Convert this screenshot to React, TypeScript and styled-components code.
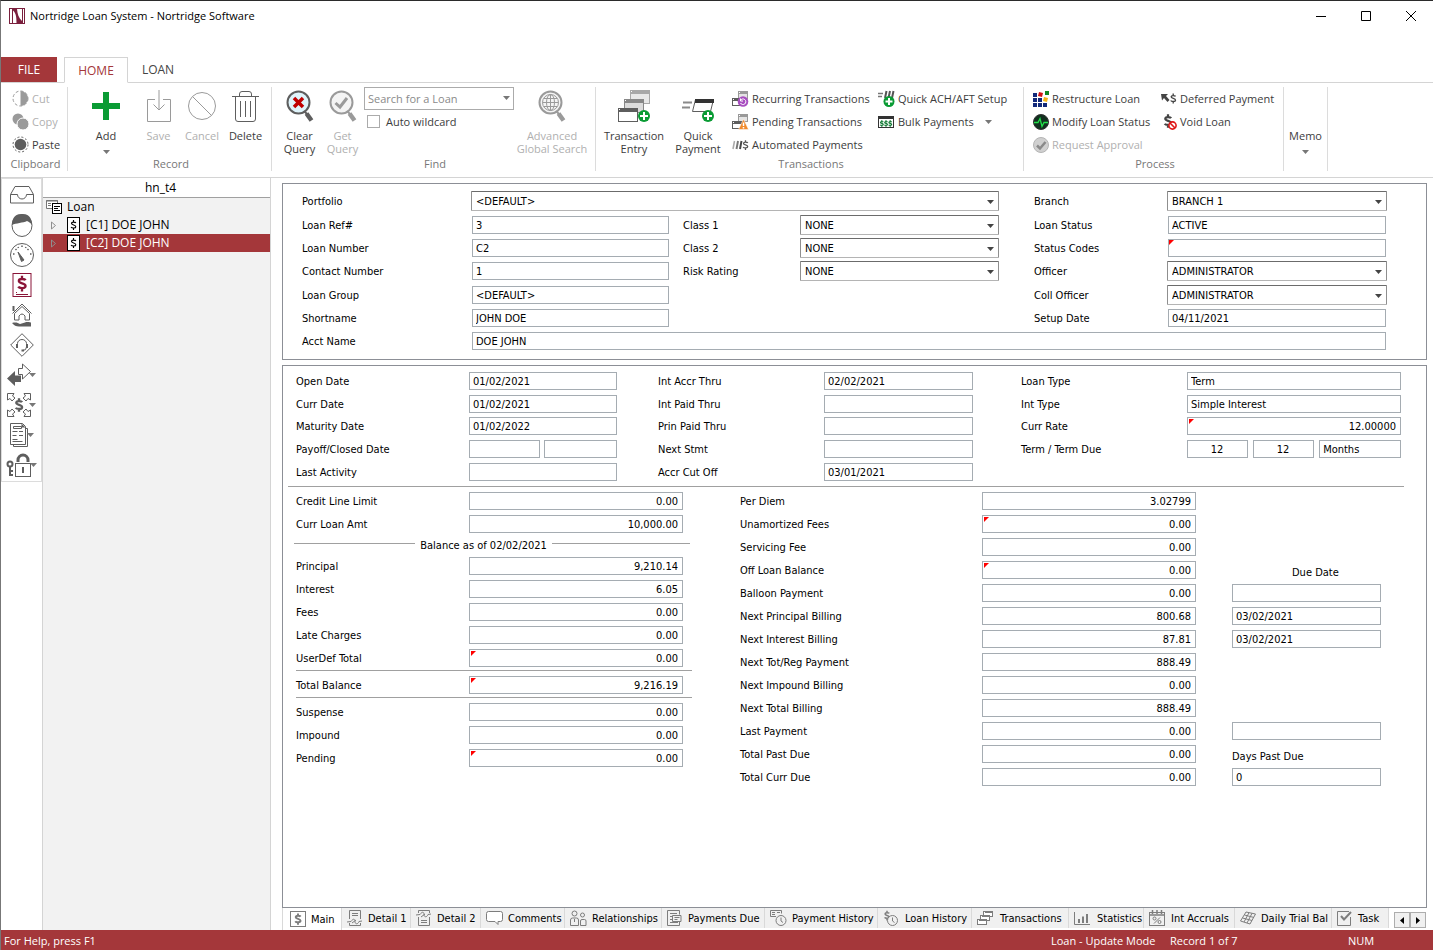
import React from "react";
import styled, { createGlobalStyle, css } from "styled-components";

const uiFont = `"Open Sans", "Noto Sans", sans-serif`;
const formFont = `"DejaVu Sans Condensed", "DejaVu Sans", sans-serif`;
const red = "#a4373a";
const ink = "#5e5e5e";
const dim = "#9a9a9a";

const GlobalStyle = createGlobalStyle`
  *, *::before, *::after { box-sizing: border-box; }
  body { margin: 0; background: #fff; font-family: ${uiFont}; font-size: 12px; color: #000; }
  button, input, select { font: inherit; color: inherit; margin: 0; padding: 0; border: 0; background: none; border-radius: 0; }
  svg { display: block; flex: none; }
`;

/* ---------- window frame ---------- */

const Window = styled.div`
  display: flex;
  flex-direction: column;
  min-height: 100vh;
  border-top: 1px solid #2b2b2b;
  border-left: 1px solid #777;
`;

const TitleBar = styled.header`
  display: flex;
  align-items: flex-start;
  height: 56px;
`;

const AppTitle = styled.h1`
  flex: 1;
  display: flex;
  align-items: center;
  gap: 5px;
  height: 29px;
  margin: 0;
  padding-left: 8px;
  font-size: 11px;
  font-weight: 400;
`;

const WindowButton = styled.button`
  display: flex;
  align-items: center;
  justify-content: center;
  width: 45px;
  height: 29px;
`;

const RibbonTabs = styled.nav`
  display: flex;
  height: 26px;
  border-bottom: 1px solid #d4d4d4;
`;

const FileTab = styled.button`
  width: 56px;
  margin-right: 7px;
  background: ${red};
  color: #fff;
`;

const RibbonTab = styled.button<{ $active?: boolean; $width: number }>`
  width: ${(p) => p.$width}px;
  color: #444;
  ${(p) =>
    p.$active &&
    css`
      height: 26px;
      border: 1px solid #d4d4d4;
      border-bottom-color: #fff;
      background: #fff;
      color: ${red};
    `}
`;

/* ---------- ribbon ---------- */

const Ribbon = styled.section`
  display: flex;
  height: 95px;
  padding-top: 4px;
  border-bottom: 1px solid #d4d4d4;
  font-size: 11px;
  color: #3c3c3c;
`;

const Group = styled.div<{ $width: number }>`
  display: flex;
  flex-direction: column;
  flex: none;
  width: ${(p) => p.$width}px;
  height: 84px;
  border-right: 1px solid #dcdcdc;
`;

const GroupBody = styled.div<{ $left: number }>`
  display: flex;
  flex: 1;
  align-items: flex-start;
  padding-left: ${(p) => p.$left}px;
`;

const GroupCaption = styled.div`
  height: 14px;
  padding-left: 3px;
  line-height: 14px;
  text-align: center;
  color: #777;
`;

const BigButton = styled.button<{ $width: number; $after?: number }>`
  display: flex;
  flex-direction: column;
  align-items: center;
  flex: none;
  width: ${(p) => p.$width}px;
  margin-right: ${(p) => p.$after ?? 0}px;
  line-height: 13px;
  white-space: nowrap;
  &:disabled { color: #b0b0b0; }
`;

const BigIcon = styled.span`
  display: flex;
  align-items: center;
  justify-content: center;
  height: 36px;
  margin: 1px 0 5px;
`;

const ArrowSlot = styled.span`
  margin-top: 8px;
`;

const SmallColumn = styled.div<{ $width: number }>`
  display: flex;
  flex-direction: column;
  flex: none;
  width: ${(p) => p.$width}px;
`;

const SmallButton = styled.button`
  display: flex;
  align-items: center;
  gap: 3px;
  height: 23px;
  white-space: nowrap;
  &:disabled { color: #b0b0b0; }
`;

const MenuMark = styled.span`
  padding-left: 8px;
`;

const SearchColumn = styled.div`
  display: flex;
  flex-direction: column;
  gap: 5px;
  width: 150px;
  margin-right: 2px;
`;

const SearchBox = styled.label`
  position: relative;
  display: block;
  select {
    appearance: none;
    width: 100%;
    height: 23px;
    padding-left: 3px;
    border: 1px solid #ababab;
    background: #fff;
    color: #8a8a8a;
  }
  svg { position: absolute; right: 4px; top: 9px; }
`;

const CheckLabel = styled.label`
  display: flex;
  align-items: center;
  gap: 6px;
  height: 13px;
  padding-left: 3px;
  input {
    appearance: none;
    width: 13px;
    height: 13px;
    border: 1px solid #ababab;
    background: #fff;
  }
`;

/* ---------- body ---------- */

const Body = styled.div`
  display: flex;
  flex: 1;
`;

const Rail = styled.nav`
  flex: none;
  align-self: flex-start;
  width: 41px;
  padding: 1px 0;
  border: 1px solid #dcdcdc;
`;

const RailButton = styled.button`
  display: flex;
  align-items: center;
  justify-content: center;
  width: 100%;
  height: 30px;
  svg + svg { margin-left: -2px; }
`;

const TreePanel = styled.aside`
  flex: none;
  width: 229px;
  background: #f2f2f2;
  border-left: 1px solid #d4d4d4;
  border-right: 1px solid #d4d4d4;
`;

const TreeHeader = styled.div`
  height: 20px;
  padding-left: 8px;
  line-height: 20px;
  text-align: center;
  background: #fff;
  border-bottom: 1px solid #a0a0a0;
`;

const TreeList = styled.ul`
  margin: 0;
  padding: 0;
  list-style: none;
`;

const TreeRow = styled.li<{ $root?: boolean; $selected?: boolean }>`
  display: flex;
  align-items: center;
  gap: ${(p) => (p.$root ? 5 : 6)}px;
  height: 18px;
  padding-left: ${(p) => (p.$root ? 3 : 8)}px;
  line-height: 16px;
  background: ${(p) => (p.$selected ? red : "transparent")};
  color: ${(p) => (p.$selected ? "#fff" : "#000")};
  svg + svg { margin-left: 5px; }
`;

const Main = styled.main`
  display: flex;
  flex-direction: column;
  flex: 1;
  min-width: 0;
  padding: 5px 6px 0 11px;
  font-family: ${formFont};
  font-size: 11px;
`;

const HeaderPanel = styled.section`
  display: grid;
  grid-template-columns: 169px 199fr 130px 199fr 168px 220fr;
  grid-template-rows: 24px 23px 23px 24px 23px 23px 20px;
  align-items: start;
  padding: 7px 39px 8px 19px;
  border: 1px solid #8c8f96;
`;

const DetailPanel = styled.section`
  display: flex;
  flex-direction: column;
  flex: 1;
  margin-top: 5px;
  padding-top: 6px;
  border: 1px solid #8c8f96;
`;

const Label = styled.label<{ $row: number; $col: number; $indent?: number; $tall?: boolean }>`
  grid-row: ${(p) => p.$row};
  grid-column: ${(p) => p.$col};
  padding-top: 1px;
  padding-left: ${(p) => p.$indent ?? 0}px;
  line-height: ${(p) => (p.$tall ? 20 : 18)}px;
  white-space: nowrap;
`;

/* Sits just above the field below it. */
const CaptionLabel = styled(Label)`
  align-self: end;
  line-height: 13px;
  padding-top: 0;
`;

const Slot = styled.div<{ $row: number; $col: number; $span?: number; $gap?: number }>`
  position: relative;
  display: flex;
  gap: ${(p) => p.$gap ?? 0}px;
  grid-row: ${(p) => p.$row};
  grid-column: ${(p) => p.$col} / span ${(p) => p.$span ?? 1};
  min-width: 0;
`;

const TextInput = styled.input<{ $align?: string; $inset?: boolean; $grow?: number }>`
  flex: ${(p) => p.$grow ?? 1} 1 0;
  min-width: 0;
  height: 18px;
  margin: ${(p) => (p.$inset ? 1 : 0)}px;
  padding: 0 4px 0 3px;
  border: 1px solid #a5acb2;
  background: #fff;
  text-align: ${(p) => p.$align ?? "left"};
`;

const ComboBox = styled.select`
  appearance: none;
  flex: 1;
  min-width: 0;
  height: 20px;
  padding-left: 4px;
  border: 1px solid;
  border-color: #6b6b6b #8f8f8f #b4b4b4;
  border-radius: 1px;
  background: #fff;
`;

const ComboArrow = styled.svg`
  position: absolute;
  right: 5px;
  top: 9px;
  pointer-events: none;
`;

const Flag = styled.svg`
  position: absolute;
  left: 2px;
  top: 2px;
`;

const DatesGrid = styled.div`
  display: grid;
  grid-template-columns: 173px 148fr 207px 149fr 214px 214fr;
  grid-template-rows: 23px 22px 23px 23px 18px;
  align-items: start;
  padding: 0 25px 0 13px;
`;

const WideRule = styled.hr`
  width: auto;
  height: 1px;
  margin: 5px 22px 5px 5px;
  border: 0;
  background: #a0a0a0;
`;

const Lower = styled.div`
  display: grid;
  grid-template-columns: 387fr 641fr;
  column-gap: 57px;
  align-items: start;
  padding: 0 45px 0 13px;
`;

const AmountGrid = styled.div`
  display: grid;
  grid-template-columns: 173px 1fr;
  grid-auto-rows: 18px;
  row-gap: 5px;
`;

const BillingGrid = styled.div`
  display: grid;
  grid-template-columns: 242px 214fr 36px 149fr;
  grid-auto-rows: 18px;
  row-gap: 5px;
`;

const Rule = styled.hr`
  height: 1px;
  margin: 3px -9px 5px 0;
  border: 0;
  background: #a0a0a0;
`;

const BalanceTitle = styled.h2`
  display: flex;
  align-items: center;
  gap: 5px;
  height: 24px;
  margin: 0 -7px 0 -2px;
  font-size: 11px;
  font-weight: 400;
  white-space: nowrap;
`;

const TitleLine = styled.span<{ $grow: number }>`
  flex: ${(p) => p.$grow} 1 0;
  height: 1px;
  margin-bottom: 4px;
  background: #a0a0a0;
`;

const SheetStrip = styled.div`
  display: flex;
  align-items: flex-start;
  height: 22px;
`;

const SheetTabs = styled.div`
  display: flex;
  flex: 1;
  min-width: 0;
  overflow: hidden;
`;

const SheetTab = styled.button<{ $active?: boolean; $width: number }>`
  display: flex;
  align-items: center;
  gap: 5px;
  flex: none;
  width: ${(p) => p.$width}px;
  height: ${(p) => (p.$active ? 22 : 20)}px;
  padding-left: ${(p) => (p.$active ? 7 : 5)}px;
  background: ${(p) => (p.$active ? "#fff" : "#f0f0f0")};
  border-right: 1px solid #d9d9d9;
  border-left: ${(p) => (p.$active ? "1px solid #d9d9d9" : "0")};
  white-space: nowrap;
`;

const Scroller = styled.div`
  display: flex;
  margin: 4px 1px 0 0;
`;

const ScrollButton = styled.button`
  display: flex;
  align-items: center;
  justify-content: center;
  width: 16px;
  height: 16px;
  border: 1px solid #adadad;
  background: #f0f0f0;
`;

const StatusBar = styled.footer`
  display: flex;
  align-items: center;
  height: 20px;
  padding-left: 3px;
  font-size: 11px;
  background: ${red};
  color: #fff;
`;

const StatusCell = styled.span<{ $width?: number }>`
  ${(p) => (p.$width ? `width: ${p.$width}px;` : "flex: 1;")}
  white-space: nowrap;
`;

/* ---------- icons ---------- */

type IconProps = { w: number; h?: number; children: React.ReactNode };
const Icon = ({ w, h = w, children }: IconProps) => (
  <svg width={w} height={h} viewBox={`0 0 ${w} ${h}`} fill="none" aria-hidden="true">
    {children}
  </svg>
);

/* An S curve with a vertical bar, centred on (x, y) and scaled by s. */
const Dollar = ({ x, y, s = 1, c = ink, b = 2 }: { x: number; y: number; s?: number; c?: string; b?: number }) => (
  <g transform={`translate(${x} ${y}) scale(${s})`} stroke={c} strokeWidth={b}>
    <path d="M3.5-3.2C2.6-4.6-3-5-3-2.4-3 .4 3.4-.6 3.4 2.4 3.4 5-2.6 4.800-3.600 3M0-7.500V-4M0 4V7.500" />
  </g>
);

const DownArrow = ({ c = "#777" }: { c?: string }) => (
  <Icon w={7} h={4}>
    <path d="M0 0h7L3.500 4z" fill={c} />
  </Icon>
);

const Plus = ({ x, y, r }: { x: number; y: number; r: number }) => (
  <g>
    <circle cx={x} cy={y} r={r} fill="#0a9b34" />
    <path d={`M${x - r + 2} ${y}H${x + r - 2}M${x} ${y - r + 2}V${y + r - 2}`} stroke="#fff" strokeWidth="2" />
  </g>
);

/* A small window: outlined body with a solid title band of height t. */
const Card = ({ x, y, w, h, c, f = "#fff", t = 4 }: { x: number; y: number; w: number; h: number; c: string; f?: string; t?: number }) => (
  <g>
    <rect x={x + 0.5} y={y + 0.5} width={w - 1} height={h - 1} fill={f} stroke={c} />
    <rect x={x} y={y} width={w} height={t} fill={c} />
    <rect x={x + 1} y={y + 1} width="1" height="1" fill="#fff" />
  </g>
);

const LogoIcon = () => (
  <Icon w={16}>
    <rect width="16" height="16" fill="#7a1f3d" />
    <path d="M1 1h2v14H1zM4 2.500C7 5 7.500 9 7.500 15H4z" fill="#fff" />
    <path d="M8 1h5v12C9.500 10 8.500 6 8 1zM14 1h1v14h-1z" fill="#fff" />
  </Icon>
);

const CutIcon = () => (
  <Icon w={17}>
    <circle cx="8.500" cy="8.500" r="7.500" stroke={dim} strokeDasharray="3 2" />
    <path d="M8.500 1a7.500 7.500 0 0 1 0 15z" fill={dim} />
  </Icon>
);
const CopyIcon = () => (
  <Icon w={17}>
    <circle cx="6" cy="6" r="5.500" fill={dim} />
    <circle cx="11" cy="11" r="6" fill={dim} stroke="#fff" />
  </Icon>
);
const PasteIcon = () => (
  <Icon w={17}>
    <circle cx="8.500" cy="8.500" r="7.500" stroke={ink} strokeDasharray="2 2" />
    <circle cx="8.500" cy="8.500" r="5.800" fill={ink} />
  </Icon>
);
const AddIcon = () => (
  <Icon w={28}>
    <path d="M11 0h6v11h11v6H17v11h-6V17H0v-6h11z" fill="#0a9b34" />
  </Icon>
);
const SaveIcon = () => (
  <Icon w={24} h={32}>
    <path d="M8 9.500H.5v22h23v-22H16M12 0v20M6.500 14.500 12 20l5.500-5.500" stroke={dim} />
  </Icon>
);
const CancelIcon = () => (
  <Icon w={28}>
    <circle cx="14" cy="14" r="13.500" stroke={dim} />
    <path d="M4.500 4.500l19 19" stroke={dim} />
  </Icon>
);
const DeleteIcon = () => (
  <Icon w={27} h={31}>
    <path d="M0 5.500h27M7.500 5V3q0-2.500 2.500-2.500h7q2.500 0 2.500 2.500v2M3.500 5.500V28q0 2.500 2.500 2.500h15q2.500 0 2.500-2.500V5.500M8.500 10v16M13.500 10v16M18.500 10v16" stroke={ink} />
  </Icon>
);

const Lens = ({ c, f, children }: { c: string; f: string; children: React.ReactNode }) => (
  <Icon w={28} h={33}>
    <path d="M18 21l3 3" stroke={c} strokeWidth="2" />
    <path d="M20.500 23.500l5 7" stroke={c} strokeWidth="4.500" />
    <circle cx="12.500" cy="12.500" r="11" fill={f} stroke={c} strokeWidth="2" />
    {children}
  </Icon>
);
const ClearQueryIcon = () => (
  <Lens c={ink} f="#dff4fb">
    <path d="M8 8l9 9M17 8l-9 9" stroke="#c00000" strokeWidth="3.500" />
  </Lens>
);
const GetQueryIcon = () => (
  <Lens c={dim} f="#f4f4f4">
    <path d="M6.500 13l4.500 4 7-9" stroke={dim} strokeWidth="3" />
  </Lens>
);
const GlobeQueryIcon = () => (
  <Lens c={dim} f="#f4f4f4">
    <circle cx="12.500" cy="12.500" r="8" stroke={dim} />
    <ellipse cx="12.500" cy="12.500" rx="4" ry="8" stroke={dim} />
    <path d="M4.500 12.500h16M12.500 4.500v16M6 8.500h13M6 16.500h13" stroke={dim} />
  </Lens>
);

const TransactionEntryIcon = () => (
  <Icon w={34} h={34}>
    <Card x={13} y={1} w={20} h={14} c="#a8a8a8" f="#e8e8e8" />
    <Card x={7} y={10} w={20} h={14} c="#888" f="#dcdcdc" />
    <Card x={1} y={19} w={20} h={14} c={ink} />
    <Plus x={27} y={27} r={6} />
  </Icon>
);
const QuickPaymentIcon = () => (
  <Icon w={33} h={34}>
    <path d="M1 13.500h9M0 18.500h8" stroke="#8a8a8a" strokeWidth="2" />
    <path d="M13.500 10.500h18l-3 12h-18z" fill="#fff" stroke={ink} />
    <path d="M13 12h19" stroke="#333" strokeWidth="4" />
    <Plus x={26} y={27} r={6} />
  </Icon>
);
const RecurringIcon = () => (
  <Icon w={17} h={16}>
    <Card x={6} y={0} w={10} h={8} c="#999" f="#e4e4e4" t={3} />
    <Card x={0} y={7} w={11} h={8} c={ink} t={3} />
    <circle cx="11" cy="10.500" r="5.300" fill="#a84fc0" />
    <path d="M8.500 9.500a2.800 2.800 0 1 1 0 2.500M8.500 7.500v2.500H11" stroke="#fff" />
  </Icon>
);
const PendingIcon = () => (
  <Icon w={17} h={16}>
    <Card x={6} y={0} w={10} h={8} c="#999" f="#e4e4e4" t={3} />
    <Card x={0} y={7} w={11} h={8} c={ink} t={3} />
    <path d="M11.500 5l5 10.500h-10z" fill="#f08a2c" stroke="#fff" strokeWidth="0.500" />
    <path d="M11.500 8.500v3.500M11.500 13v1.500" stroke="#fff" strokeWidth="1.500" />
  </Icon>
);
const AutomatedIcon = () => (
  <Icon w={17} h={16}>
    <path d="M2.500 4L1 12" stroke="#aaa" strokeWidth="1.500" />
    <path d="M6 4L4.500 12" stroke="#777" strokeWidth="2" />
    <path d="M9.500 4L8 12" stroke="#444" strokeWidth="2" />
    <Dollar x={13.5} y={8} s={0.65} c="#555" />
  </Icon>
);
const AchIcon = () => (
  <Icon w={17} h={18}>
    <path d="M0 3.500h5M0 6.500h4" stroke="#777" strokeWidth="1.500" />
    <path d="M8.500 1L7 8M12 1l-1.500 7M15.500 1L14 8" stroke="#555" strokeWidth="2" />
    <Plus x={11} y={11.5} r={5.5} />
  </Icon>
);
const BulkIcon = () => (
  <Icon w={17} h={14}>
    <rect x="0.500" y="1.500" width="15" height="11" fill="#fff" stroke="#333" />
    <path d="M0 2.500h16" stroke="#333" strokeWidth="3" />
    <Dollar x={3.8} y={8.5} s={0.42} c="#117a34" b={3} />
    <Dollar x={8} y={8.5} s={0.42} c="#117a34" b={3} />
    <Dollar x={12.2} y={8.5} s={0.42} c="#117a34" b={3} />
  </Icon>
);
const RestructureIcon = () => (
  <Icon w={16}>
    <path d="M0 2h4v4H0zM0 7h4v4H0zM0 12h4v4H0zM5 7h4v4H5zM5 12h4v4H5zM10 12h4v4h-4z" fill="#12297a" />
    <path d="M6 1l4 1-1 4-4-1z" fill="#d01414" />
    <path d="M12 0h4v4h-4z" fill="#128a24" />
    <path d="M11 6l4 1-1 4-4-1z" fill="#f5b516" />
  </Icon>
);
const ModifyIcon = () => (
  <Icon w={16}>
    <circle cx="8" cy="8" r="7.500" fill="#12301f" stroke="#333" />
    <path d="M1 8.500h4l2-4 2 8 2-4h4" stroke="#22e04a" strokeWidth="1.300" />
  </Icon>
);
const ApprovalIcon = () => (
  <Icon w={16}>
    <circle cx="8" cy="8" r="7.500" fill="#d0d0d0" stroke="#b4b4b4" />
    <path d="M4 8.500l3 3 5.500-6.500" stroke="#8a8a8a" strokeWidth="2.500" />
  </Icon>
);
const DeferredIcon = () => (
  <Icon w={17} h={14}>
    <path d="M1 2h7L6 4l3.500 4-2 2L4 6 2 8.500z" fill="#444" />
    <Dollar x={13.2} y={6.5} s={0.68} c="#444" />
  </Icon>
);
const VoidIcon = () => (
  <Icon w={17} h={16}>
    <Dollar x={8} y={7} s={0.9} c="#444" b={2.5} />
    <circle cx="12.500" cy="11.500" r="3.600" fill="#fff" stroke="#e01818" strokeWidth="1.600" />
    <path d="M10 9l5 5" stroke="#e01818" strokeWidth="1.600" />
  </Icon>
);

const InboxIcon = () => (
  <Icon w={24}>
    <path d="M.5 11.500L5 3.500h14l4.500 8v8.500H.500zM.5 11.500h7a4.500 4.500 0 0 0 9 0h7" stroke={ink} />
  </Icon>
);
const PersonIcon = () => (
  <Icon w={24}>
    <ellipse cx="12" cy="12.500" rx="10" ry="11" stroke={ink} />
    <path d="M2 12C2 4 6 1 12 1s10 3 10 11c-1-2-3-3-5-4-4 2-11 2-15 4z" fill={ink} />
  </Icon>
);
const GaugeIcon = () => (
  <Icon w={24}>
    <circle cx="12" cy="12" r="11.500" stroke={ink} />
    <path d="M8 9l6 8-2.500 1.500z" fill={ink} stroke={ink} />
    <path d="M3 11h1.500M20 11h1.500M5.500 6l1 1M18.500 6l-1 1M12 2.500V4M8 4l.5 1M16 4l-.5 1" stroke={ink} strokeWidth="1.500" />
  </Icon>
);
const LoanIcon = () => (
  <Icon w={20} h={24}>
    <rect x="1" y="0.500" width="18" height="23" stroke="#8a1538" />
    <Dollar x={10} y={10.5} c="#8a1538" s={1.05} b={2.2} />
    <path d="M4 21.500h12M4 19.500h1" stroke="#8a1538" />
  </Icon>
);
const HouseIcon = () => (
  <Icon w={24}>
    <path d="M2.500 10.500L12 1l9.500 9.500M4.500 10.500v6.500H9v-4q3-4 6 0v4h4.500v-6.500L12 3.500z" stroke={ink} />
    <path d="M3.500 8V3" stroke={ink} strokeWidth="2" />
    <path d="M2 20c4-1 6 0 8 1l5-1.500c2-1 6 0 6 0v4H9c-3 0-5-1-7-3.500z" fill={ink} />
  </Icon>
);
const HeadsetIcon = () => (
  <Icon w={24}>
    <path d="M12 .7L23.300 12 12 23.300.7 12zM7.500 14V10.500a4.500 4 0 0 1 9 0V14q0 3.500-4 3.500" stroke={ink} />
    <path d="M7 11v4M17 11v4M11.500 17.500h2.500" stroke={ink} strokeWidth="2" />
  </Icon>
);
const SwapIcon = () => (
  <Icon w={24}>
    <path d="M11.500 5.500h4v-4.500l8 7.500-8 7.500v-4.500h-4z" fill="#fff" stroke={ink} />
    <path d="M0 15.500L8 8v4.500h6V19H8v4z" fill={ink} />
  </Icon>
);
const SpreadIcon = () => (
  <Icon w={24}>
    <Dollar x={12} y={12} s={0.9} b={2.6} />
    <path d="M.5 7V.5H7L5.500 3 8 5 5 8 3 5.500zM17 .5h6.500V7L21 5.500 19 8l-3-3 2.500-2zM.5 17v6.500H7L5.500 21 8 19l-3-3-2 2.500zM23.500 17v6.500H17l1.500-2.500L16 19l3-3 2 2.500z" stroke={ink} />
  </Icon>
);
const ReportIcon = () => (
  <Icon w={20} h={24}>
    <path d="M1.500.5h12l3 3v18h-15zM4.500 22v1.500h14V5.500H17M4.500 3.500h8v2h-8zM3.500 8.500h5M3.500 12.500h4M3.500 16.500h5M10 8.500h4M10 12.500h4M3.500 18.500h10" stroke={ink} />
    <path d="M12.500.5l4 4h-4z" fill={ink} />
  </Icon>
);
const LockIcon = () => (
  <Icon w={26} h={26}>
    <rect x="9.500" y="11.500" width="15" height="13" fill="#fff" stroke={ink} />
    <path d="M12 10V8a5 5 0 0 1 10 0v2" stroke={ink} strokeWidth="3" />
    <path d="M17 15v6M16 16.500h2" stroke={ink} strokeWidth="2" />
    <circle cx="4" cy="12" r="2.500" stroke={ink} strokeWidth="2" />
    <path d="M4 14.500V24M4 19h3M4 23h3" stroke={ink} strokeWidth="2" />
  </Icon>
);

const RootIcon = () => (
  <Icon w={16} h={14}>
    <path d="M.5.5h11v8H.500z" fill="#fff" stroke="#777" />
    <path d="M0 1h12M2 3.500h3M2 5.500h3" stroke="#777" />
    <rect x="6.500" y="3.500" width="9" height="10" fill="#fff" stroke="#000" />
    <path d="M8 6.500h6M8 8.500h4M8 10.500h6" stroke="#000" />
  </Icon>
);
const Expander = () => (
  <Icon w={5} h={9}>
    <path d="M.5 1l4 3.500-4 3.500z" stroke="#8f8f8f" />
  </Icon>
);
const NodeIcon = () => (
  <Icon w={13} h={16}>
    <rect x="0.500" y="0.500" width="12" height="15" fill="#fff" stroke="#000" />
    <Dollar x={6.5} y={8} s={0.68} c="#000" b={1.7} />
  </Icon>
);

const g = "#7d7d7d";
const sheetIcons: Record<string, React.ReactNode> = {
  Main: (
    <Icon w={16}>
      <rect x="0.500" y="0.500" width="15" height="15" stroke={g} />
      <Dollar x={8} y={8} s={0.75} c={g} b={2.6} />
    </Icon>
  ),
  "Detail 1": (
    <Icon w={16}>
      <path d="M2.500 9V.5h11V9M2.500 13v2.500h11V13M5 3.500h6M5 5.500h6M0 12l4-.5c2-3 4-3 4 0s3 3 4 0l3-.5M5 13l4-3" stroke={g} />
    </Icon>
  ),
  "Detail 2": (
    <Icon w={16}>
      <path d="M2.500 3V.5h11V3M2.500 7v8.500h11V7M5 10.500h6M5 12.500h6M0 5l4-.5c2-3 4-3 4 0s3 3 4 0l3-.5M5 7l4-3" stroke={g} />
    </Icon>
  ),
  Comments: (
    <Icon w={17} h={16}>
      <path d="M2.500 1.500h12q2 0 2 2v6q0 2-2 2H12v3l-3-3H2.500q-2 0-2-2v-6q0-2 2-2z" fill="#fff" stroke={g} />
    </Icon>
  ),
  Relationships: (
    <Icon w={17} h={16}>
      <circle cx="4.500" cy="3.500" r="2.500" stroke={g} />
      <circle cx="12.500" cy="5" r="2" stroke={g} />
      <path d="M.5 15.500V10q0-2 2-2h4q2 0 2 2v5.500zM10.500 15.500V11q0-1.500 1.500-1.500h2.500q1.500 0 1.500 1.500v4.500zM4.500 9v3" stroke={g} />
    </Icon>
  ),
  "Payments Due": (
    <Icon w={16} h={16}>
      <path d="M.5.5h12v4M12.500 12v3.500H.5V.5M3 3.500h7M3 6.500h2M3 9.500h2M3 12.500h8M5.500 5.500h8.500v6H5.500zM7.500 7.500h5M7.500 9.500h3" stroke={g} />
    </Icon>
  ),
  "Payment History": (
    <Icon w={17} h={16}>
      <path d="M6 6.500H.5v-6h11v3M2 2.500h3M2 4.500h3M7 2.500h3" stroke={g} />
      <circle cx="11" cy="10.500" r="5" fill="#f0f0f0" stroke={g} />
      <path d="M11 7.500v3.500l2 1.500" stroke={g} />
    </Icon>
  ),
  "Loan History": (
    <Icon w={17} h={16}>
      <Dollar x={4} y={5.5} s={0.65} c={g} b={2.3} />
      <circle cx="9.500" cy="10.500" r="5" fill="#f0f0f0" stroke={g} />
      <path d="M9.500 7.500v3.500l2 1.500" stroke={g} />
    </Icon>
  ),
  Transactions: (
    <Icon w={18} h={16}>
      <Card x={6} y={1} w={10} h={6} c={g} t={2} />
      <Card x={3} y={5} w={10} h={6} c={g} t={2} />
      <Card x={0} y={9} w={10} h={6} c={g} t={2} />
    </Icon>
  ),
  Statistics: (
    <Icon w={18} h={16}>
      <path d="M.5 2v12.500H16" stroke={g} />
      <path d="M5 9v4M9 6.500V13M13 4v9" stroke={g} strokeWidth="2" />
    </Icon>
  ),
  "Int Accruals": (
    <Icon w={17} h={16}>
      <rect x="0.500" y="2.500" width="15" height="13" stroke={g} />
      <path d="M3.500 0v4M8 0v4M12.500 0v4M0 5h16" stroke={g} strokeWidth="1.500" />
      <circle cx="5.500" cy="8.500" r="1.500" stroke={g} />
      <circle cx="10.500" cy="12" r="1.500" stroke={g} />
      <path d="M11 7.500l-6 6" stroke={g} />
    </Icon>
  ),
  "Daily Trial Bal": (
    <Icon w={16}>
      <path d="M6 2l9.500 2-5.500 10L.5 11zM4.500 5l9.500 2.500M2.500 8l9.500 2.500M9 2.700L4 12M12 3.300L7 13" stroke={g} />
    </Icon>
  ),
  Task: (
    <Icon w={16}>
      <path d="M12 1.500H.5v14h13V7" stroke={g} />
      <path d="M4 6l3 3.500L14 2" stroke={g} strokeWidth="2" />
    </Icon>
  ),
};

/* ---------- data ---------- */

type FieldSpec = {
  label: string;
  value: string;
  row: number;
  pair: number;
  span?: number;
  combo?: boolean;
  flag?: boolean;
  right?: boolean;
};

const headerFields: FieldSpec[] = [
  { label: "Portfolio", value: "<DEFAULT>", row: 1, pair: 0, span: 3, combo: true },
  { label: "Branch", value: "BRANCH 1", row: 1, pair: 2, combo: true },
  { label: "Loan Ref#", value: "3", row: 2, pair: 0 },
  { label: "Class 1", value: "NONE", row: 2, pair: 1, combo: true },
  { label: "Loan Status", value: "ACTIVE", row: 2, pair: 2 },
  { label: "Loan Number", value: "C2", row: 3, pair: 0 },
  { label: "Class 2", value: "NONE", row: 3, pair: 1, combo: true },
  { label: "Status Codes", value: "", row: 3, pair: 2, flag: true },
  { label: "Contact Number", value: "1", row: 4, pair: 0 },
  { label: "Risk Rating", value: "NONE", row: 4, pair: 1, combo: true },
  { label: "Officer", value: "ADMINISTRATOR", row: 4, pair: 2, combo: true },
  { label: "Loan Group", value: "<DEFAULT>", row: 5, pair: 0 },
  { label: "Coll Officer", value: "ADMINISTRATOR", row: 5, pair: 2, combo: true },
  { label: "Shortname", value: "JOHN DOE", row: 6, pair: 0 },
  { label: "Setup Date", value: "04/11/2021", row: 6, pair: 2 },
  { label: "Acct Name", value: "DOE JOHN", row: 7, pair: 0, span: 5 },
];

const dateFields: FieldSpec[] = [
  { label: "Open Date", value: "01/02/2021", row: 1, pair: 0 },
  { label: "Int Accr Thru", value: "02/02/2021", row: 1, pair: 1 },
  { label: "Loan Type", value: "Term", row: 1, pair: 2 },
  { label: "Curr Date", value: "01/02/2021", row: 2, pair: 0 },
  { label: "Int Paid Thru", value: "", row: 2, pair: 1 },
  { label: "Int Type", value: "Simple Interest", row: 2, pair: 2 },
  { label: "Maturity Date", value: "01/02/2022", row: 3, pair: 0 },
  { label: "Prin Paid Thru", value: "", row: 3, pair: 1 },
  { label: "Curr Rate", value: "12.00000", row: 3, pair: 2, flag: true, right: true },
  { label: "Next Stmt", value: "", row: 4, pair: 1 },
  { label: "Last Activity", value: "", row: 5, pair: 0 },
  { label: "Accr Cut Off", value: "03/01/2021", row: 5, pair: 1 },
];

type Amount = [label: string, value: string, flag?: boolean];

const limits: Amount[] = [["Credit Line Limit", "0.00"], ["Curr Loan Amt", "10,000.00"]];
const balances: Amount[] = [
  ["Principal", "9,210.14"],
  ["Interest", "6.05"],
  ["Fees", "0.00"],
  ["Late Charges", "0.00"],
  ["UserDef Total", "0.00", true],
];
const total: Amount[] = [["Total Balance", "9,216.19", true]];
const others: Amount[] = [["Suspense", "0.00"], ["Impound", "0.00"], ["Pending", "0.00", true]];
const billing: Amount[] = [
  ["Per Diem", "3.02799"],
  ["Unamortized Fees", "0.00", true],
  ["Servicing Fee", "0.00"],
  ["Off Loan Balance", "0.00", true],
  ["Balloon Payment", "0.00"],
  ["Next Principal Billing", "800.68"],
  ["Next Interest Billing", "87.81"],
  ["Next Tot/Reg Payment", "888.49"],
  ["Next Impound Billing", "0.00"],
  ["Next Total Billing", "888.49"],
  ["Last Payment", "0.00"],
  ["Total Past Due", "0.00"],
  ["Total Curr Due", "0.00"],
];
const dueDates: [row: number, value: string][] = [[5, ""], [6, "03/02/2021"], [7, "03/02/2021"], [11, ""]];

const sheets: [string, number][] = [
  ["Main", 60],
  ["Detail 1", 69],
  ["Detail 2", 70],
  ["Comments", 84],
  ["Relationships", 97],
  ["Payments Due", 103],
  ["Payment History", 113],
  ["Loan History", 94],
  ["Transactions", 97],
  ["Statistics", 75],
  ["Int Accruals", 91],
  ["Daily Trial Bal", 97],
  ["Task", 57],
];

/* ---------- form pieces ---------- */

const toId = (label: string) => label.toLowerCase().replace(/[^a-z0-9]+/g, "-");

const RedFlag = () => (
  <Flag width="5" height="5" viewBox="0 0 5 5" aria-hidden="true">
    <path d="M0 0h5L0 5z" fill="#f00" />
  </Flag>
);

const PairField = ({ spec, indents, tall }: { spec: FieldSpec; indents: number[]; tall?: boolean }) => {
  const col = spec.pair * 2 + 1;
  const id = toId(spec.label);
  return (
    <>
      <Label htmlFor={id} $row={spec.row} $col={col} $indent={indents[spec.pair]} $tall={tall}>
        {spec.label}
      </Label>
      <Slot $row={spec.row} $col={col + 1} $span={spec.span}>
        {spec.combo ? (
          <>
            <ComboBox id={id}>
              <option>{spec.value}</option>
            </ComboBox>
            <ComboArrow width="7" height="4" viewBox="0 0 7 4" aria-hidden="true">
              <path d="M0 0h7L3.500 4z" fill="#444" />
            </ComboArrow>
          </>
        ) : (
          <TextInput id={id} defaultValue={spec.value} $inset={tall} $align={spec.right ? "right" : "left"} />
        )}
        {spec.flag && <RedFlag />}
      </Slot>
    </>
  );
};

const Amounts = ({ items }: { items: Amount[] }) => (
  <>
    {items.map(([label, value, flag], i) => (
      <React.Fragment key={label}>
        <Label htmlFor={toId(label)} $row={i + 1} $col={1}>
          {label}
        </Label>
        <Slot $row={i + 1} $col={2}>
          <TextInput id={toId(label)} defaultValue={value} $align="right" />
          {flag && <RedFlag />}
        </Slot>
      </React.Fragment>
    ))}
  </>
);

const Small = ({ icon, text, disabled, menu }: { icon: React.ReactNode; text: string; disabled?: boolean; menu?: boolean }) => (
  <SmallButton disabled={disabled}>
    {icon}
    <span>{text}</span>
    {menu && (
      <MenuMark>
        <DownArrow />
      </MenuMark>
    )}
  </SmallButton>
);

type BigProps = {
  icon?: React.ReactNode;
  lines: string[];
  width: number;
  after?: number;
  disabled?: boolean;
  menu?: boolean;
};
const Big = ({ icon, lines, width, after, disabled, menu }: BigProps) => (
  <BigButton $width={width} $after={after} disabled={disabled}>
    <BigIcon>{icon}</BigIcon>
    {lines.map((line) => (
      <span key={line}>{line}</span>
    ))}
    {menu && (
      <ArrowSlot>
        <DownArrow />
      </ArrowSlot>
    )}
  </BigButton>
);

const railItems: [string, React.ReactNode, boolean][] = [
  ["Inbox", <InboxIcon />, false],
  ["Contacts", <PersonIcon />, false],
  ["Dashboard", <GaugeIcon />, false],
  ["Loans", <LoanIcon />, false],
  ["Collateral", <HouseIcon />, false],
  ["Support", <HeadsetIcon />, false],
  ["Transfer", <SwapIcon />, true],
  ["Disburse", <SpreadIcon />, true],
  ["Reports", <ReportIcon />, true],
  ["Security", <LockIcon />, true],
];

/* ---------- page ---------- */

export default function App() {
  return (
    <Window>
      <GlobalStyle />
      <TitleBar>
        <AppTitle>
          <LogoIcon />
          Nortridge Loan System - Nortridge Software
        </AppTitle>
        <WindowButton aria-label="Minimize">
          <Icon w={10}>
            <path d="M0 5.500h10" stroke="#000" />
          </Icon>
        </WindowButton>
        <WindowButton aria-label="Maximize">
          <Icon w={10}>
            <path d="M.5.5h9v9h-9z" stroke="#000" />
          </Icon>
        </WindowButton>
        <WindowButton aria-label="Close">
          <Icon w={10}>
            <path d="M0 0l10 10M10 0L0 10" stroke="#000" />
          </Icon>
        </WindowButton>
      </TitleBar>

      <RibbonTabs>
        <FileTab>FILE</FileTab>
        <RibbonTab $active $width={64}>
          HOME
        </RibbonTab>
        <RibbonTab $width={60}>LOAN</RibbonTab>
      </RibbonTabs>

      <Ribbon>
        <Group $width={67}>
          <GroupBody $left={11}>
            <SmallColumn $width={55}>
              <Small icon={<CutIcon />} text="Cut" disabled />
              <Small icon={<CopyIcon />} text="Copy" disabled />
              <Small icon={<PasteIcon />} text="Paste" />
            </SmallColumn>
          </GroupBody>
          <GroupCaption>Clipboard</GroupCaption>
        </Group>
        <Group $width={204}>
          <GroupBody $left={17}>
            <Big icon={<AddIcon />} lines={["Add"]} width={42} after={10} menu />
            <Big icon={<SaveIcon />} lines={["Save"]} width={43} disabled />
            <Big icon={<CancelIcon />} lines={["Cancel"]} width={44} disabled />
            <Big icon={<DeleteIcon />} lines={["Delete"]} width={43} />
          </GroupBody>
          <GroupCaption>Record</GroupCaption>
        </Group>
        <Group $width={324}>
          <GroupBody $left={6}>
            <Big icon={<ClearQueryIcon />} lines={["Clear", "Query"]} width={43} />
            <Big icon={<GetQueryIcon />} lines={["Get", "Query"]} width={43} disabled />
            <SearchColumn>
              <SearchBox>
                <select aria-label="Search for a Loan">
                  <option>Search for a Loan</option>
                </select>
                <DownArrow />
              </SearchBox>
              <CheckLabel>
                <input type="checkbox" />
                Auto wildcard
              </CheckLabel>
            </SearchColumn>
            <Big icon={<GlobeQueryIcon />} lines={["Advanced", "Global Search"]} width={72} disabled />
          </GroupBody>
          <GroupCaption>Find</GroupCaption>
        </Group>
        <Group $width={428}>
          <GroupBody $left={8}>
            <Big icon={<TransactionEntryIcon />} lines={["Transaction", "Entry"]} width={60} />
            <Big icon={<QuickPaymentIcon />} lines={["Quick", "Payment"]} width={68} />
            <SmallColumn $width={146}>
              <Small icon={<RecurringIcon />} text="Recurring Transactions" />
              <Small icon={<PendingIcon />} text="Pending Transactions" />
              <Small icon={<AutomatedIcon />} text="Automated Payments" />
            </SmallColumn>
            <SmallColumn $width={140}>
              <Small icon={<AchIcon />} text="Quick ACH/AFT Setup" />
              <Small icon={<BulkIcon />} text="Bulk Payments" menu />
            </SmallColumn>
          </GroupBody>
          <GroupCaption>Transactions</GroupCaption>
        </Group>
        <Group $width={260}>
          <GroupBody $left={9}>
            <SmallColumn $width={127}>
              <Small icon={<RestructureIcon />} text="Restructure Loan" />
              <Small icon={<ModifyIcon />} text="Modify Loan Status" />
              <Small icon={<ApprovalIcon />} text="Request Approval" disabled />
            </SmallColumn>
            <SmallColumn $width={118}>
              <Small icon={<DeferredIcon />} text="Deferred Payment" />
              <Small icon={<VoidIcon />} text="Void Loan" />
            </SmallColumn>
          </GroupBody>
          <GroupCaption>Process</GroupCaption>
        </Group>
        <Group $width={44}>
          <GroupBody $left={0}>
            <Big lines={["Memo"]} width={43} menu />
          </GroupBody>
        </Group>
      </Ribbon>

      <Body>
        <Rail>
          {railItems.map(([name, icon, menu]) => (
            <RailButton key={name} aria-label={name}>
              {icon}
              {menu && <DownArrow />}
            </RailButton>
          ))}
        </Rail>
        <TreePanel>
          <TreeHeader>hn_t4</TreeHeader>
          <TreeList>
            <TreeRow $root>
              <RootIcon />
              Loan
            </TreeRow>
            <TreeRow>
              <Expander />
              <NodeIcon />
              [C1] DOE JOHN
            </TreeRow>
            <TreeRow $selected>
              <Expander />
              <NodeIcon />
              [C2] DOE JOHN
            </TreeRow>
          </TreeList>
        </TreePanel>

        <Main>
          <HeaderPanel>
            {headerFields.map((spec) => (
              <PairField key={spec.label} spec={spec} indents={[0, 13, 35]} tall />
            ))}
          </HeaderPanel>

          <DetailPanel>
            <DatesGrid>
              {dateFields.map((spec) => (
                <PairField key={spec.label} spec={spec} indents={[0, 41, 48]} />
              ))}
              <Label htmlFor="payoff-date" $row={4} $col={1}>
                Payoff/Closed Date
              </Label>
              <Slot $row={4} $col={2} $gap={4}>
                <TextInput id="payoff-date" defaultValue="" $grow={71} />
                <TextInput aria-label="Closed Date" defaultValue="" $grow={73} />
              </Slot>
              <Label htmlFor="term" $row={4} $col={5} $indent={48}>
                Term / Term Due
              </Label>
              <Slot $row={4} $col={6} $gap={5}>
                <TextInput id="term" defaultValue="12" $align="center" $grow={60} />
                <TextInput aria-label="Term Due" defaultValue="12" $align="center" $grow={60} />
                <TextInput aria-label="Term Unit" defaultValue="Months" $grow={84} />
              </Slot>
            </DatesGrid>

            <WideRule />

            <Lower>
              <div>
                <AmountGrid>
                  <Amounts items={limits} />
                </AmountGrid>
                <BalanceTitle>
                  <TitleLine $grow={122} />
                  Balance as of 02/02/2021
                  <TitleLine $grow={139} />
                </BalanceTitle>
                <AmountGrid>
                  <Amounts items={balances} />
                </AmountGrid>
                <Rule />
                <AmountGrid>
                  <Amounts items={total} />
                </AmountGrid>
                <Rule />
                <AmountGrid>
                  <Amounts items={others} />
                </AmountGrid>
              </div>

              <BillingGrid>
                <Amounts items={billing} />
                <CaptionLabel as="span" id="due-date" $row={4} $col={4} $indent={60}>
                  Due Date
                </CaptionLabel>
                {dueDates.map(([row, value]) => (
                  <Slot key={row} $row={row} $col={4}>
                    <TextInput aria-labelledby="due-date" defaultValue={value} />
                  </Slot>
                ))}
                <CaptionLabel htmlFor="days-past-due" $row={12} $col={4}>
                  Days Past Due
                </CaptionLabel>
                <Slot $row={13} $col={4}>
                  <TextInput id="days-past-due" defaultValue="0" />
                </Slot>
              </BillingGrid>
            </Lower>
          </DetailPanel>

          <SheetStrip>
            <SheetTabs role="tablist">
              {sheets.map(([name, width], i) => (
                <SheetTab key={name} role="tab" aria-selected={i === 0} $active={i === 0} $width={width}>
                  {sheetIcons[name]}
                  {name}
                </SheetTab>
              ))}
            </SheetTabs>
            <Scroller>
              <ScrollButton aria-label="Scroll left">
                <Icon w={4} h={7}>
                  <path d="M4 0v7L0 3.500z" fill="#000" />
                </Icon>
              </ScrollButton>
              <ScrollButton aria-label="Scroll right">
                <Icon w={4} h={7}>
                  <path d="M0 0v7l4-3.500z" fill="#000" />
                </Icon>
              </ScrollButton>
            </Scroller>
          </SheetStrip>
        </Main>
      </Body>

      <StatusBar>
        <StatusCell>For Help, press F1</StatusCell>
        <StatusCell $width={119}>Loan - Update Mode</StatusCell>
        <StatusCell $width={178}>Record 1 of 7</StatusCell>
        <StatusCell $width={85}>NUM</StatusCell>
      </StatusBar>
    </Window>
  );
}
